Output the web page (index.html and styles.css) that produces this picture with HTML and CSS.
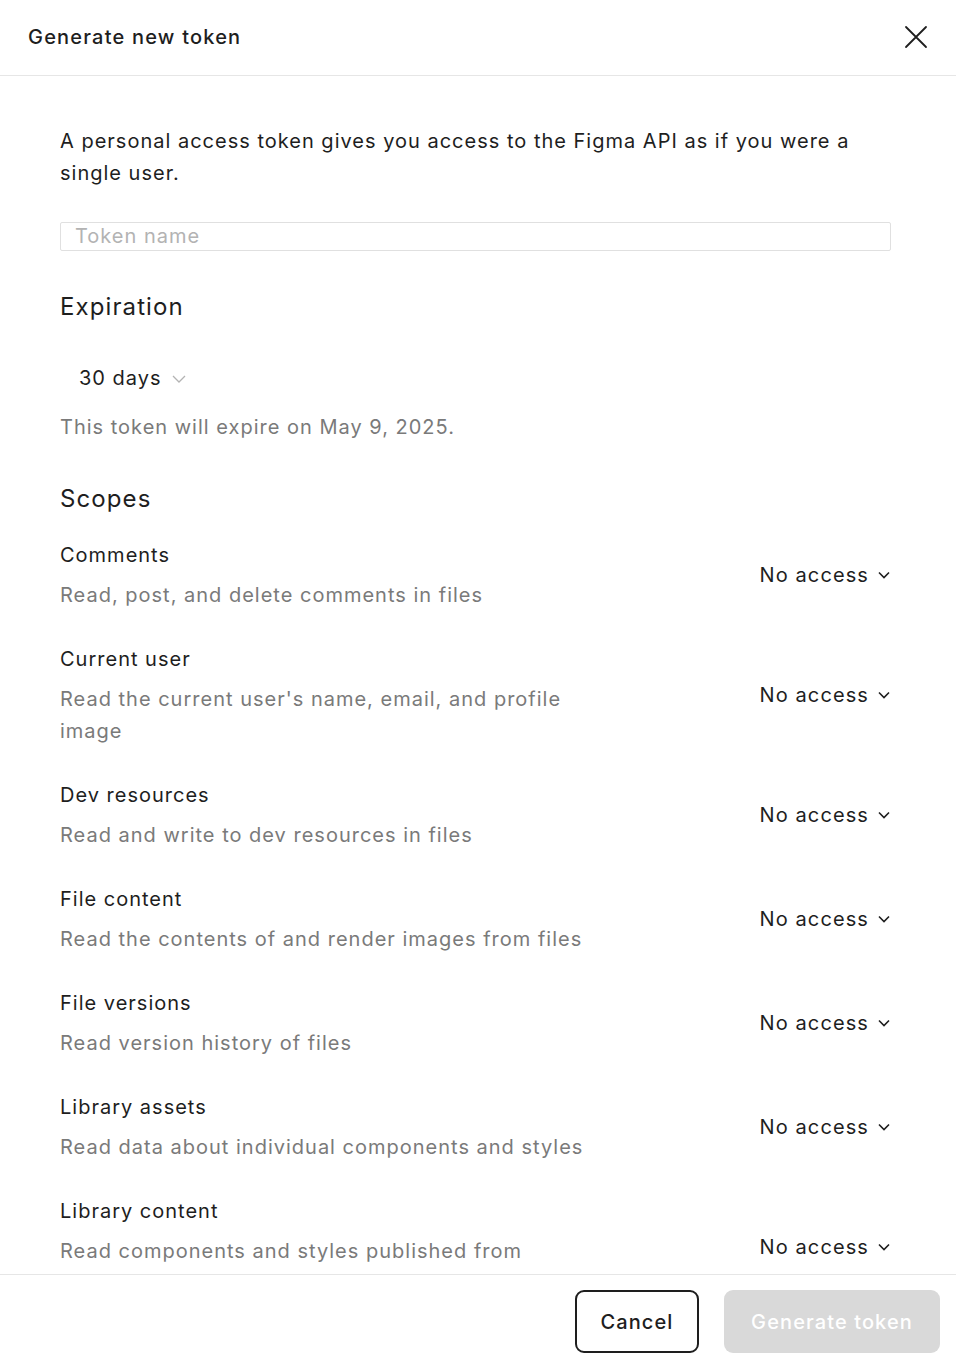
FILE: index.html
```html
<!DOCTYPE html>
<html lang="en">
<head>
<meta charset="utf-8">
<title>Generate new token</title>
<link rel="stylesheet" href="styles.css">
</head>
<body>
<div class="modal">
  <header class="modal-header">
    <h1 class="modal-title">Generate new token</h1>
    <button class="close-btn" aria-label="Close">
      <svg width="24" height="24" viewBox="0 0 24 24" fill="none" stroke="#1e1e1e" stroke-width="1.8" stroke-linecap="round"><path d="M2 2L22 22M22 2L2 22"/></svg>
    </button>
  </header>
  <main class="modal-body">
    <p class="intro">A personal access token gives you access to the Figma API as if you were a single user.</p>
    <div class="input">Token name</div>
    <h2 class="section-title expiration">Expiration</h2>
    <div class="expiry-select">
      <span>30 days</span>
      <svg class="chev-light" width="14" height="8" viewBox="0 0 14 8" fill="none" stroke="#b3b3b3" stroke-width="1.3"><path d="M1 1L7 7L13 1"/></svg>
    </div>
    <p class="expire-note">This token will expire on May 9, 2025.</p>
    <h2 class="section-title scopes">Scopes</h2>
    <div class="scope-list">
      <div class="scope">
        <div class="scope-text"><div class="scope-name">Comments</div><div class="scope-desc">Read, post, and delete comments in files</div></div>
        <div class="access"><span>No access</span><svg width="12" height="8" viewBox="0 0 12 8" fill="none" stroke="#1e1e1e" stroke-width="1.6"><path d="M1 1.5L6 6.5L11 1.5"/></svg></div>
      </div>
      <div class="scope">
        <div class="scope-text"><div class="scope-name">Current user</div><div class="scope-desc">Read the current user's name, email, and profile image</div></div>
        <div class="access"><span>No access</span><svg width="12" height="8" viewBox="0 0 12 8" fill="none" stroke="#1e1e1e" stroke-width="1.6"><path d="M1 1.5L6 6.5L11 1.5"/></svg></div>
      </div>
      <div class="scope">
        <div class="scope-text"><div class="scope-name">Dev resources</div><div class="scope-desc">Read and write to dev resources in files</div></div>
        <div class="access"><span>No access</span><svg width="12" height="8" viewBox="0 0 12 8" fill="none" stroke="#1e1e1e" stroke-width="1.6"><path d="M1 1.5L6 6.5L11 1.5"/></svg></div>
      </div>
      <div class="scope">
        <div class="scope-text"><div class="scope-name">File content</div><div class="scope-desc">Read the contents of and render images from files</div></div>
        <div class="access"><span>No access</span><svg width="12" height="8" viewBox="0 0 12 8" fill="none" stroke="#1e1e1e" stroke-width="1.6"><path d="M1 1.5L6 6.5L11 1.5"/></svg></div>
      </div>
      <div class="scope">
        <div class="scope-text"><div class="scope-name">File versions</div><div class="scope-desc">Read version history of files</div></div>
        <div class="access"><span>No access</span><svg width="12" height="8" viewBox="0 0 12 8" fill="none" stroke="#1e1e1e" stroke-width="1.6"><path d="M1 1.5L6 6.5L11 1.5"/></svg></div>
      </div>
      <div class="scope">
        <div class="scope-text"><div class="scope-name">Library assets</div><div class="scope-desc">Read data about individual components and styles</div></div>
        <div class="access"><span>No access</span><svg width="12" height="8" viewBox="0 0 12 8" fill="none" stroke="#1e1e1e" stroke-width="1.6"><path d="M1 1.5L6 6.5L11 1.5"/></svg></div>
      </div>
      <div class="scope">
        <div class="scope-text"><div class="scope-name">Library content</div><div class="scope-desc">Read components and styles published from libraries</div></div>
        <div class="access"><span>No access</span><svg width="12" height="8" viewBox="0 0 12 8" fill="none" stroke="#1e1e1e" stroke-width="1.6"><path d="M1 1.5L6 6.5L11 1.5"/></svg></div>
      </div>
    </div>
  </main>
  <footer class="modal-footer">
    <button class="btn btn-cancel">Cancel</button>
    <button class="btn btn-primary" disabled>Generate token</button>
  </footer>
</div>
</body>
</html>
```

FILE: styles.css
```css
* { box-sizing: border-box; }
html, body { margin: 0; padding: 0; height: 100%; }
body {
  font-family: Inter, "Noto Sans", "Liberation Sans", sans-serif;
  color: #1e1e1e;
  background: #ffffff;
  font-size: 20px;
  line-height: 32px;
  letter-spacing: 1px;
}
.modal {
  height: 1362px;
  display: flex;
  flex-direction: column;
  overflow: hidden;
}
.modal-header {
  height: 76px;
  flex: 0 0 76px;
  border-bottom: 1px solid #e6e6e6;
  display: flex;
  align-items: center;
  justify-content: space-between;
  padding: 0 28px 1px 28px;
}
.modal-title {
  margin: 0;
  font-size: 20px;
  font-weight: 500;
  line-height: 32px;
  letter-spacing: 1.2px;
}
.close-btn {
  background: none;
  border: 0;
  padding: 0;
  width: 24px;
  height: 24px;
  display: flex;
}
.modal-body {
  flex: 1 1 auto;
  overflow: hidden;
  padding: 49px 65px 0 60px;
}
.intro {
  margin: 0;
}
.input {
  margin-top: 33px;
  height: 29px;
  border: 1px solid #e0e0e0;
  border-radius: 2px;
  padding: 0 14px;
  color: #b3b3b3;
  line-height: 26px;
}
.section-title {
  margin: 0;
  font-size: 24px;
  font-weight: 400;
  line-height: 32px;
  letter-spacing: 1.1px;
}
.expiration { margin-top: 40px; }
.expiry-select {
  margin-top: 39px;
  padding-left: 19px;
  display: flex;
  align-items: center;
  gap: 10px;
}
.chev-light { margin-top: 1px; }
.expire-note {
  margin: 17px 0 0;
  color: #7a7a7a;
}
.scopes { margin-top: 40px; }
.scope-list {
  margin-top: 24px;
  display: flex;
  flex-direction: column;
  gap: 32px;
}
.scope {
  display: flex;
  align-items: center;
  justify-content: space-between;
}
.scope-text {
  width: 548px;
}
.scope-desc {
  margin-top: 8px;
  color: #7a7a7a;
}
.access {
  display: flex;
  align-items: center;
  gap: 9px;
  letter-spacing: 1.1px;
  padding-right: 1px;
}
.modal-footer {
  flex: 0 0 88px;
  border-top: 1px solid #e6e6e6;
  display: flex;
  justify-content: flex-end;
  align-items: flex-start;
  gap: 25px;
  padding: 15px 16px 0 0;
}
.btn {
  height: 63px;
  border-radius: 9px;
  font-family: Inter, "Noto Sans", "Liberation Sans", sans-serif;
  font-size: 20px;
  font-weight: 500;
  letter-spacing: 1.1px;
}
.btn-cancel {
  width: 124px;
  background: #ffffff;
  border: 2px solid #1e1e1e;
  color: #1e1e1e;
}
.btn-primary {
  width: 216px;
  background: #d9d9d9;
  border: 0;
  color: #ffffff;
}
```
